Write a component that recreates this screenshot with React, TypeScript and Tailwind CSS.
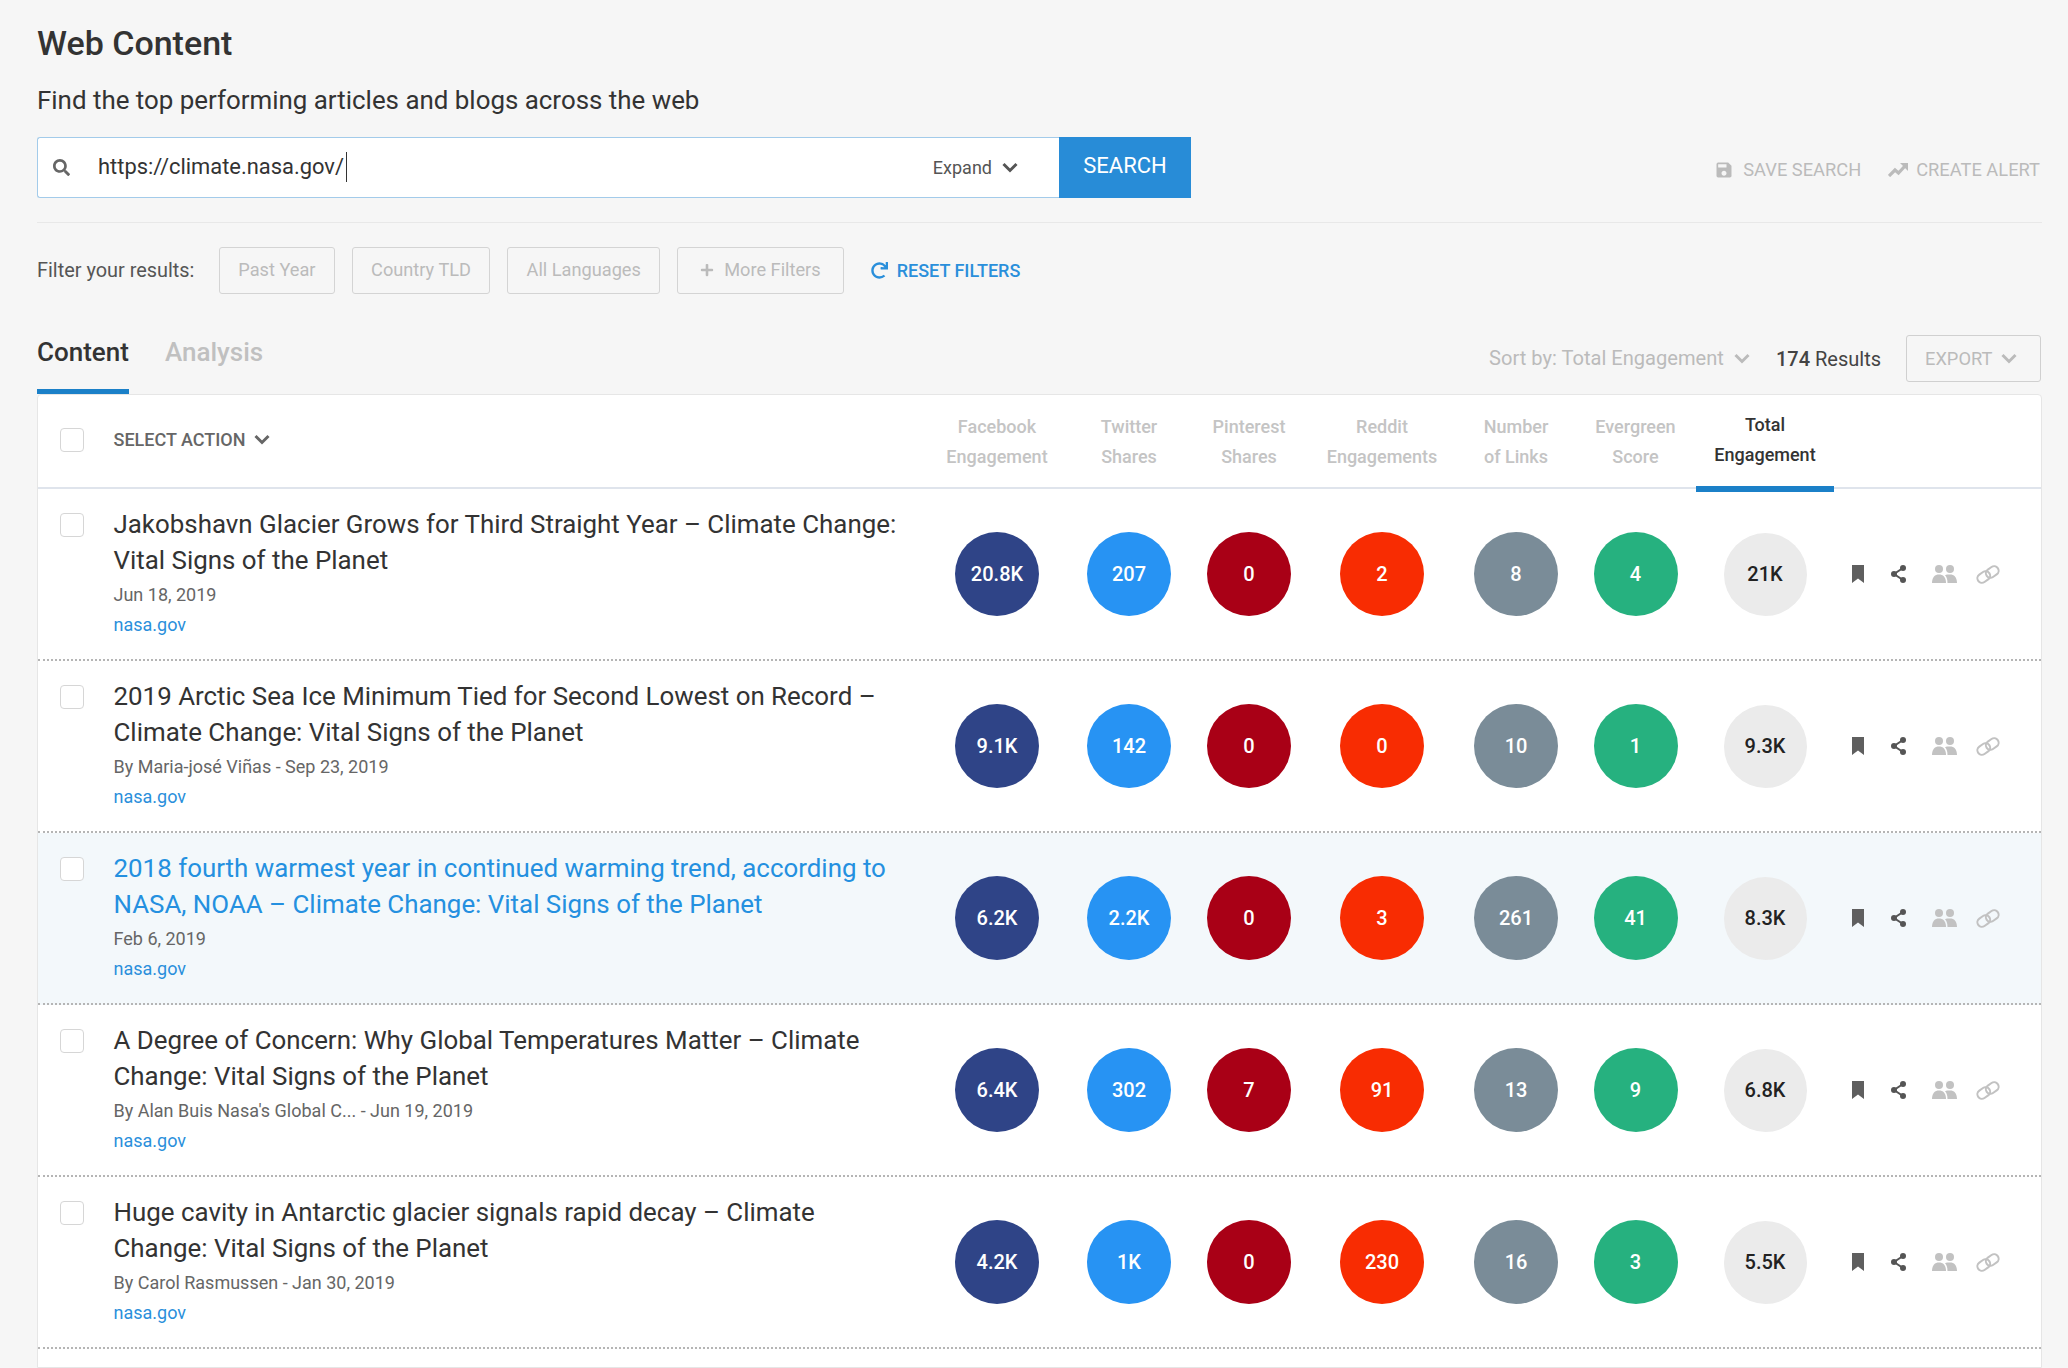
import { FaSearch, FaPlus, FaRedo } from "react-icons/fa";
import { MdSave } from "react-icons/md";

interface Article {
  title: string[];
  meta: string;
  stats: string[];
  total: string;
  active?: boolean;
}

const articles: Article[] = [
  {
    title: ["Jakobshavn Glacier Grows for Third Straight Year – Climate Change:", "Vital Signs of the Planet"],
    meta: "Jun 18, 2019",
    stats: ["20.8K", "207", "0", "2", "8", "4"],
    total: "21K",
  },
  {
    title: ["2019 Arctic Sea Ice Minimum Tied for Second Lowest on Record –", "Climate Change: Vital Signs of the Planet"],
    meta: "By Maria-josé Viñas - Sep 23, 2019",
    stats: ["9.1K", "142", "0", "0", "10", "1"],
    total: "9.3K",
  },
  {
    title: ["2018 fourth warmest year in continued warming trend, according to", "NASA, NOAA – Climate Change: Vital Signs of the Planet"],
    meta: "Feb 6, 2019",
    stats: ["6.2K", "2.2K", "0", "3", "261", "41"],
    total: "8.3K",
    active: true,
  },
  {
    title: ["A Degree of Concern: Why Global Temperatures Matter – Climate", "Change: Vital Signs of the Planet"],
    meta: "By Alan Buis Nasa's Global C... - Jun 19, 2019",
    stats: ["6.4K", "302", "7", "91", "13", "9"],
    total: "6.8K",
  },
  {
    title: ["Huge cavity in Antarctic glacier signals rapid decay – Climate", "Change: Vital Signs of the Planet"],
    meta: "By Carol Rasmussen - Jan 30, 2019",
    stats: ["4.2K", "1K", "0", "230", "16", "3"],
    total: "5.5K",
  },
];

const columns = [
  { lines: ["Facebook", "Engagement"], width: "w-[138px]", color: "bg-[#2f4487]" },
  { lines: ["Twitter", "Shares"], width: "w-[126px]", color: "bg-[#2793f3]" },
  { lines: ["Pinterest", "Shares"], width: "w-[114px]", color: "bg-[#a90016]" },
  { lines: ["Reddit", "Engagements"], width: "w-[152px]", color: "bg-[#f82c02]" },
  { lines: ["Number", "of Links"], width: "w-[116px]", color: "bg-[#7a8c98]" },
  { lines: ["Evergreen", "Score"], width: "w-[123px]", color: "bg-[#26b17f]" },
];

function Chevron({ className }: { className?: string }) {
  return (
    <svg width="16" height="11" viewBox="0 0 16 11" fill="none" className={className}>
      <path d="M1.5 2 L8 8.5 L14.5 2" stroke="currentColor" strokeWidth="3" />
    </svg>
  );
}

function BookmarkIcon() {
  return (
    <svg width="12" height="18" viewBox="0 0 12 18" className="text-[#5f5f5f]">
      <path d="M0 0 H12 V18 L6 13.5 L0 18 Z" fill="currentColor" />
    </svg>
  );
}

function ShareIcon() {
  return (
    <svg width="15" height="18" viewBox="0 0 15 18" className="text-[#555555]">
      <path d="M12 3 L3 9 L12 15" fill="none" stroke="currentColor" strokeWidth="2" />
      <circle cx="12" cy="3" r="3" fill="currentColor" />
      <circle cx="3" cy="9" r="3" fill="currentColor" />
      <circle cx="12" cy="15" r="3" fill="currentColor" />
    </svg>
  );
}

function PeopleIcon() {
  return (
    <svg width="25" height="18" viewBox="0 0 25 18" className="text-[#c2c2c2]">
      <circle cx="7" cy="4" r="4" fill="currentColor" />
      <circle cx="18" cy="4" r="4" fill="currentColor" />
      <path d="M0 18 C0 12 3 9.5 7 9.5 C11 9.5 14 12 14 18 Z" fill="currentColor" />
      <path d="M15.5 18 C15.5 14 14.5 11.5 13 10.2 C14.5 9.6 16 9.5 18 9.5 C22 9.5 25 12 25 18 Z" fill="currentColor" />
    </svg>
  );
}

function ChainIcon() {
  return (
    <svg width="24" height="19" viewBox="0 0 24 19" fill="none" className="text-[#c2c2c2]">
      <rect x="1" y="7.5" width="13.5" height="9" rx="4.5" transform="rotate(-35 7.75 12)" stroke="currentColor" strokeWidth="2" />
      <rect x="9.5" y="2.5" width="13.5" height="9" rx="4.5" transform="rotate(-35 16.25 7)" stroke="currentColor" strokeWidth="2" />
    </svg>
  );
}

function TrendIcon() {
  return (
    <svg width="20" height="14" viewBox="0 0 20 14" className="text-[#bbbbbb]">
      <path d="M1 13 L7 7 L10.5 10 L17 3" fill="none" stroke="currentColor" strokeWidth="3.2" />
      <path d="M12 0 H20 V8 Z" fill="currentColor" />
    </svg>
  );
}

function Checkbox() {
  return <div className="w-6 h-6 shrink-0 rounded-[4px] border border-[#d6d6d6] bg-white" />;
}

function FilterButton({ label }: { label: string }) {
  return (
    <div className="h-[47px] px-[18.3px] pb-[1px] flex items-center rounded-[3px] border border-[#d4d4d4] text-[18.2px] text-[#bbbbbb]">
      {label}
    </div>
  );
}

function Row({ article }: { article: Article }) {
  return (
    <div
      className={`flex h-[172px] shrink-0 border-b-2 border-dotted border-[#b5b5b5] ${
        article.active ? "bg-[#f3f8fb]" : "bg-white"
      }`}
    >
      <div className="pl-[22px] pt-[24px]">
        <Checkbox />
      </div>
      <div className="ml-[29.5px] w-[814.5px] shrink-0 pt-[17px]">
        <div className={`text-[25.9px] leading-[36px] ${article.active ? "text-[#2490e0]" : "text-[#333333]"}`}>
          {article.title.map((line) => (
            <div key={line}>{line}</div>
          ))}
        </div>
        <div className="mt-[2px] text-[18px] leading-[30px] text-[#666666]">{article.meta}</div>
        <div className="text-[18px] leading-[30px] text-[#2a8fdb]">nasa.gov</div>
      </div>
      {columns.map((col, i) => (
        <div key={col.lines[0]} className={`${col.width} shrink-0 flex items-center justify-center`}>
          <div
            className={`${col.color} w-[84px] h-[84px] rounded-full flex items-center justify-center text-white text-[20px] font-medium`}
          >
            {article.stats[i]}
          </div>
        </div>
      ))}
      <div className="w-[138px] -ml-[1px] shrink-0 flex items-center justify-center">
        <div className="w-[83px] h-[83px] rounded-full bg-[#ebebeb] flex items-center justify-center text-[#222222] text-[20px] font-medium">
          {article.total}
        </div>
      </div>
      <div className="flex items-center ml-[18px]">
        <BookmarkIcon />
        <div className="ml-[27px]"><ShareIcon /></div>
        <div className="ml-[26px]"><PeopleIcon /></div>
        <div className="ml-[19px]"><ChainIcon /></div>
      </div>
    </div>
  );
}

export default function App() {
  return (
    <div className="h-[1368px] overflow-hidden bg-[#f6f6f6] pl-[37px] pr-[26px] pt-[23px] flex flex-col font-[Roboto,sans-serif]">
      <h1 className="text-[34px] leading-[40px] font-medium text-[#333333]">Web Content</h1>
      <p className="mt-[17px] text-[25.9px] leading-[40px] text-[#333333]">Find the top performing articles and blogs across the web</p>

      <div className="mt-[17px] flex items-center justify-between">
        <div className="flex h-[61px]">
          <div className="w-[1022px] flex items-center bg-white border border-[#a3cbea] border-r-0 rounded-l-[3px]">
            <FaSearch size={17} className="ml-[15px] text-[#666666]" />
            <div className="ml-[28px] mb-[2px] text-[21.9px] text-[#333333] border-r border-[#333333] leading-[30px] pr-[2px]">https://climate.nasa.gov/</div>
            <div className="ml-auto mr-[41px] flex items-center text-[18px] text-[#555555]">
              Expand
              <Chevron className="ml-[10px]" />
            </div>
          </div>
          <div className="w-[132px] bg-[#288cd7] text-white text-[22px] pb-[4px] flex items-center justify-center">SEARCH</div>
        </div>
        <div className="flex items-center text-[18.3px] text-[#bbbbbb] mt-[4px] pr-[2px]">
          <MdSave size={20} />
          <span className="ml-[9px]">SAVE SEARCH</span>
          <div className="ml-[27px] mr-[8px]"><TrendIcon /></div>
          <span>CREATE ALERT</span>
        </div>
      </div>

      <div className="mt-[24px] h-px bg-[#e8e8e8]" />

      <div className="mt-[24px] flex items-center">
        <span className="text-[19.9px] text-[#555555] w-[182px]">Filter your results:</span>
        <FilterButton label="Past Year" />
        <div className="ml-[17px]"><FilterButton label="Country TLD" /></div>
        <div className="ml-[17px]"><FilterButton label="All Languages" /></div>
        <div className="ml-[17px] h-[47px] px-[22px] pb-[1px] flex items-center rounded-[3px] border border-[#d4d4d4] text-[18.2px] text-[#bbbbbb]">
          <FaPlus size={14} className="mr-[10px]" />
          More Filters
        </div>
        <FaRedo size={17} className="ml-[27px] text-[#2a8fdb]" />
        <span className="ml-[9px] mb-[1px] text-[18px] font-medium text-[#2a8fdb]">RESET FILTERS</span>
      </div>

      <div className="flex items-start justify-between">
        <div className="flex">
          <div className="mt-[36px] h-[64px] border-b-[5px] border-[#1b80c8] text-[26px] leading-[44px] font-medium text-[#333333]">Content</div>
          <div className="mt-[36px] ml-[36px] text-[26px] leading-[44px] font-medium text-[#c0c0c0]">Analysis</div>
        </div>
        <div className="mt-[41px] mr-[1px] flex items-center">
          <span className="text-[20.1px] text-[#bbbbbb]">Sort by: Total Engagement</span>
          <Chevron className="ml-[10px] text-[#bbbbbb]" />
          <span className="ml-[26px] text-[20px] text-[#444444]"><span className="font-medium">174</span> Results</span>
          <div className="ml-[25px] w-[135px] h-[47px] flex items-center pl-[18px] rounded-[3px] border border-[#d0d0d0] text-[18.3px] text-[#bbbbbb]">
            EXPORT
            <Chevron className="ml-[9px]" />
          </div>
        </div>
      </div>

      <div className="flex-1 flex flex-col bg-white border border-[#e6e6e6] rounded-t-[4px]">
        <div className="flex h-[94px] shrink-0 border-b-[2px] border-[#dfe4ec]">
          <div className="pl-[22px] pb-[2px] flex items-center">
            <Checkbox />
          </div>
          <div className="ml-[29.5px] w-[814.5px] shrink-0 pb-[3px] flex items-center text-[18px] font-medium text-[#666666]">
            SELECT ACTION
            <Chevron className="ml-[8px]" />
          </div>
          {columns.map((col) => (
            <div
              key={col.lines[0]}
              className={`${col.width} shrink-0 pt-[17px] text-center text-[18px] leading-[30px] font-medium text-[#c4c4c4]`}
            >
              {col.lines.map((l) => (
                <div key={l}>{l}</div>
              ))}
            </div>
          ))}
          <div className="relative z-10 w-[138px] -ml-[1px] shrink-0 pt-[15px] h-[97px] text-center text-[18px] leading-[30px] font-medium text-[#333333] border-b-[6px] border-[#1b80c8]">
            <div>Total</div>
            <div>Engagement</div>
          </div>
        </div>
        {articles.map((a) => (
          <Row key={a.title[0]} article={a} />
        ))}
      </div>
    </div>
  );
}
